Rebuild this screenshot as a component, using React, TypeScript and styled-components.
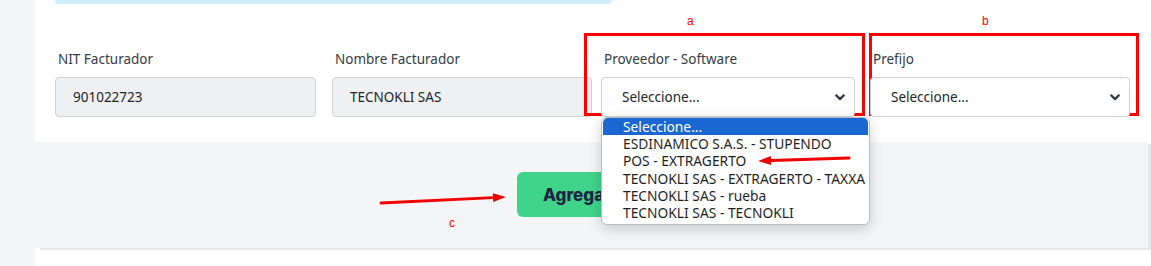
import styled, { createGlobalStyle } from 'styled-components';

const GlobalStyle = createGlobalStyle`
	html, body {
		margin: 0;
		padding: 0;
		background: #ffffff;
		font-family: "Noto Sans", "Open Sans", sans-serif;
	}
	* {
		box-sizing: border-box;
	}
`;

const Page = styled.div`
	display: flex;
	width: 1151px;
	height: 266px;
	overflow: hidden;
	background: #ffffff;
`;

const Sidebar = styled.div`
	width: 35px;
	flex-shrink: 0;
	background: #f4f5f7;
`;

const Card = styled.div`
	width: 1113px;
	display: flex;
	flex-direction: column;
	background: #ffffff;
`;

const InfoBar = styled.div`
	margin-left: 20px;
	width: 557px;
	height: 4px;
	background: #cdeff8;
	border-radius: 0 0 8px 8px;
`;

const FieldsRow = styled.div`
	display: flex;
	padding: 45px 0 25px 20px;
`;

const Field = styled.div<{ $w: number; $ml?: number }>`
	position: relative;
	width: ${p => p.$w}px;
	margin-left: ${p => p.$ml || 0}px;
	display: flex;
	flex-direction: column;
	gap: 8px;
`;

const Label = styled.label`
	font-size: 13.5px;
	line-height: 20px;
	color: #363b45;
	padding-left: 3px;
`;

const Input = styled.div`
	height: 40px;
	display: flex;
	align-items: center;
	padding-left: 17px;
	font-size: 13.5px;
	color: #212529;
	background: #eff0f2;
	border: 1px solid #cfd1d4;
	border-radius: 4px;
`;

const Select = styled.div`
	position: relative;
	height: 40px;
	display: flex;
	align-items: center;
	justify-content: space-between;
	padding: 0 9px 0 20px;
	font-size: 13.5px;
	color: #212529;
	background: #ffffff;
	border: 1px solid #cfd1d4;
	border-radius: 4px;
`;

const Annotation = styled.div<{ $l: number; $w: number }>`
	position: absolute;
	left: ${p => p.$l}px;
	top: -16px;
	width: ${p => p.$w}px;
	height: 83px;
	border: 3px solid #ff0000;
	pointer-events: none;
`;

const Mark = styled.span<{ $l: number; $t: number }>`
	position: absolute;
	left: ${p => p.$l}px;
	top: ${p => p.$t}px;
	font-family: "Liberation Sans", Arial, sans-serif;
	font-size: 12px;
	line-height: 12px;
	color: #ff0000;
`;

const OptionList = styled.ul`
	position: absolute;
	left: -1px;
	top: 39px;
	width: 269px;
	margin: 0;
	padding: 0 0 3px;
	list-style: none;
	background: #ffffff;
	border: 1px solid #b9bcc0;
	border-radius: 6px;
	box-shadow: 0 4px 14px rgba(0, 0, 0, 0.18);
	z-index: 5;
`;

const Option = styled.li<{ $active?: boolean }>`
	height: 17.2px;
	line-height: 17px;
	padding-left: 20px;
	margin: 0 1px;
	font-size: 13.8px;
	white-space: nowrap;
	color: ${p => (p.$active ? '#ffffff' : '#1f1f1f')};
	background: ${p => (p.$active ? '#1a67d2' : 'transparent')};
	border-radius: ${p => (p.$active ? '5px 5px 0 0' : '0')};
`;

const Footer = styled.div`
	position: relative;
	height: 106px;
	padding: 30px 0 0 482px;
	background: #f4f5f7;
	box-shadow: 5px 2px 0 #e7e8ea;
`;

const Button = styled.button`
	width: 148px;
	height: 45px;
	padding: 0 0 0 26px;
	text-align: left;
	border: none;
	border-radius: 6px;
	background: #40d48b;
	color: #1c2541;
	font-family: Inter, "Noto Sans", sans-serif;
	font-weight: 800;
	font-size: 17px;
`;

const Overlay = styled.svg`
	position: absolute;
	left: 0;
	top: 0;
	overflow: visible;
	pointer-events: none;
`;

const options = [
	'Seleccione...',
	'ESDINAMICO S.A.S. - STUPENDO',
	'POS - EXTRAGERTO',
	'TECNOKLI SAS - EXTRAGERTO - TAXXA',
	'TECNOKLI SAS - rueba',
	'TECNOKLI SAS - TECNOKLI',
];

function Chevron() {
	return (
		<svg width="10" height="7" viewBox="0 0 10 7">
			<path d="M1.3 1.4 L5 5.1 L8.7 1.4" fill="none" stroke="#343a40" strokeWidth="2.2" strokeLinecap="round" strokeLinejoin="round" />
		</svg>
	);
}

function Arrow({ x1, y1, x2, y2 }: { x1: number; y1: number; x2: number; y2: number }) {
	const a = Math.atan2(y2 - y1, x2 - x1);
	const len = 13;
	const half = 4.5;
	const bx = x2 - len * Math.cos(a);
	const by = y2 - len * Math.sin(a);
	const px = -Math.sin(a) * half;
	const py = Math.cos(a) * half;
	return (
		<g>
			<line x1={x1} y1={y1} x2={bx} y2={by} stroke="#f00000" strokeWidth="3" strokeLinecap="round" />
			<polygon points={`${x2},${y2} ${bx + px},${by + py} ${bx - px},${by - py}`} fill="#f00000" />
		</g>
	);
}

export default function App() {
	return (
		<>
			<GlobalStyle />
			<Page>
				<Sidebar />
				<Card>
					<InfoBar />
					<FieldsRow>
						<Field $w={261}>
							<Label>NIT Facturador</Label>
							<Input>901022723</Input>
						</Field>
						<Field $w={260} $ml={16}>
							<Label>Nombre Facturador</Label>
							<Input>TECNOKLI SAS</Input>
						</Field>
						<Field $w={254} $ml={9}>
							<Annotation $l={-17} $w={281} />
							<Mark $l={86} $t={-34}>a</Mark>
							<Label>Proveedor - Software</Label>
							<Select>
								Seleccione...
								<Chevron />
								<OptionList>
									{options.map((o, i) => (
										<Option key={o} $active={i === 0}>{o}</Option>
									))}
									<Overlay width="269" height="108">
										<Arrow x1={247} y1={40} x2={156} y2={43} />
									</Overlay>
								</OptionList>
							</Select>
						</Field>
						<Field $w={260} $ml={15}>
							<Annotation $l={-1} $w={270} />
							<Mark $l={112} $t={-34}>b</Mark>
							<Label>Prefijo</Label>
							<Select>
								Seleccione...
								<Chevron />
							</Select>
						</Field>
					</FieldsRow>
					<Footer>
						<Button>Agregar</Button>
						<Overlay width="1113" height="106">
							<Arrow x1={346} y1={61} x2={471} y2={55} />
						</Overlay>
						<Mark $l={414} $t={75}>c</Mark>
					</Footer>
				</Card>
			</Page>
		</>
	);
}
